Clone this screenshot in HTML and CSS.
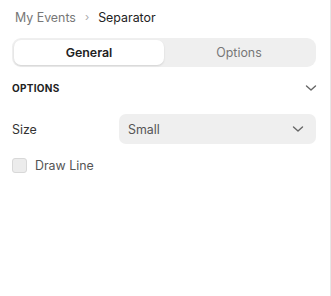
FILE: index.html
```html
<!DOCTYPE html>
<html lang="en">
<head>
    <meta charset="UTF-8">
    <meta name="viewport" content="width=device-width, initial-scale=1.0">
    <title>Separator</title>
    <link rel="stylesheet" href="styles.css">
</head>
<body>
    <div class="panel">
        <nav class="crumbs">
            <span class="crumb">My Events</span>
            <span class="crumb-sep">›</span>
            <span class="crumb current">Separator</span>
        </nav>
        <div class="tabs">
            <button class="tab active">General</button>
            <button class="tab">Options</button>
        </div>
        <section class="group">
            <header class="group-head">
                <span class="group-title">Options</span>
                <svg class="chev" width="12" height="8" viewBox="0 0 12 8"><path d="M1.5 2 L6 6 L10.5 2" fill="none" stroke="#666" stroke-width="1.4" stroke-linecap="round" stroke-linejoin="round"/></svg>
            </header>
            <div class="field">
                <label class="field-label">Size</label>
                <div class="select">
                    <span>Small</span>
                    <svg width="12" height="8" viewBox="0 0 12 8"><path d="M1.5 2 L6 6 L10.5 2" fill="none" stroke="#666" stroke-width="1.4" stroke-linecap="round" stroke-linejoin="round"/></svg>
                </div>
            </div>
            <label class="check">
                <span class="box"></span>
                <span>Draw Line</span>
            </label>
        </section>
    </div>
</body>
</html>
```

FILE: styles.css
```css
*{box-sizing: border-box;}
body{margin: 0; font-family: Inter, "Noto Sans", sans-serif; background: #fff; color: #222;}

.panel{
    width: 331px;
    height: 296px;
    border-right: 1px solid #e6e6e6;
    padding: 0 14px 0 12px;
}

.crumbs{
    display: flex;
    align-items: center;
    height: 34px;
    padding-left: 3px;
    font-size: 12.4px;
    gap: 9px;
}
.crumb{color: #777;}
.crumb-sep{color: #aaa; font-size: 11px;}
.crumb.current{color: #222;}

.tabs{
    margin-top: 4px;
    display: flex;
    background: #efefef;
    border-radius: 9px;
    padding: 2px;
    height: 29px;
}
.tab{
    flex: 1;
    border: none;
    background: none;
    font-family: inherit;
    font-size: 12.4px;
    color: #777;
    border-radius: 7px;
    padding: 0;
}
.tab.active{
    background: #fff;
    color: #222;
    font-weight: 600;
    box-shadow: 0 1px 2px rgba(0,0,0,.12);
}

.group{margin-top: 12px;}
.group-head{
    display: flex;
    justify-content: space-between;
    align-items: center;
    height: 18px;
}
.group-title{
    font-size: 10px;
    font-weight: 700;
    text-transform: uppercase;
    letter-spacing: .3px;
    color: #222;
}
.chev{margin-right: -1px;}

.field{
    margin-top: 17px;
    display: flex;
    align-items: center;
}
.field-label{
    width: 107px;
    font-size: 12.4px;
    color: #333;
}
.select{
    flex: 1;
    height: 30px;
    background: #efefef;
    border-radius: 7px;
    display: flex;
    align-items: center;
    justify-content: space-between;
    padding: 0 12px 0 9px;
    font-size: 12.4px;
    color: #555;
}

.check{
    margin-top: 14px;
    display: flex;
    align-items: center;
    gap: 8px;
    font-size: 12.4px;
    color: #555;
}
.box{
    width: 15px;
    height: 15px;
    border: 1px solid #d8d8d8;
    background: #ececec;
    border-radius: 3px;
}
```
